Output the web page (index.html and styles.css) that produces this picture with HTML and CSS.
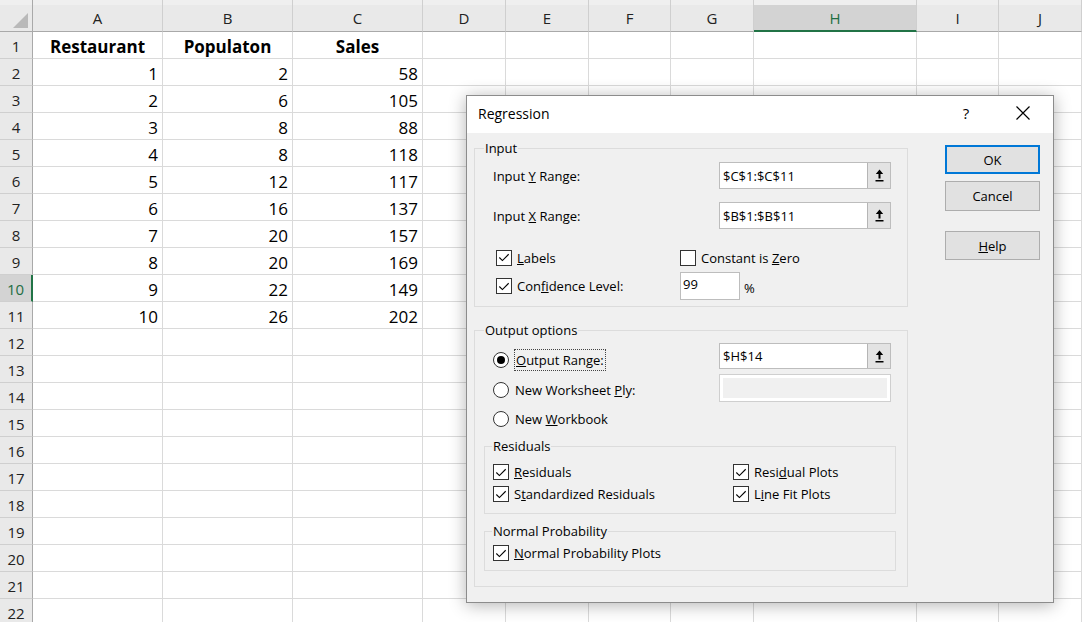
FILE: index.html
```html
<!DOCTYPE html>
<html>
<head>
<meta charset="utf-8">
<link rel="stylesheet" href="styles.css">
</head>
<body>
<div class="sheet">
  <div class="hd corner"><span class="tri"></span></div>
  <div class="hd col">A</div><div class="hd col">B</div><div class="hd col">C</div><div class="hd col">D</div><div class="hd col">E</div><div class="hd col">F</div><div class="hd col">G</div><div class="hd col sel">H</div><div class="hd col">I</div><div class="hd col">J</div>

  <div class="hd rw">1</div><div class="c b">Restaurant</div><div class="c b">Populaton</div><div class="c b">Sales</div><div class="c"></div><div class="c"></div><div class="c"></div><div class="c"></div><div class="c"></div><div class="c"></div><div class="c"></div>
  <div class="hd rw">2</div><div class="c n">1</div><div class="c n">2</div><div class="c n">58</div><div class="c"></div><div class="c"></div><div class="c"></div><div class="c"></div><div class="c"></div><div class="c"></div><div class="c"></div>
  <div class="hd rw">3</div><div class="c n">2</div><div class="c n">6</div><div class="c n">105</div><div class="c"></div><div class="c"></div><div class="c"></div><div class="c"></div><div class="c"></div><div class="c"></div><div class="c"></div>
  <div class="hd rw">4</div><div class="c n">3</div><div class="c n">8</div><div class="c n">88</div><div class="c"></div><div class="c"></div><div class="c"></div><div class="c"></div><div class="c"></div><div class="c"></div><div class="c"></div>
  <div class="hd rw">5</div><div class="c n">4</div><div class="c n">8</div><div class="c n">118</div><div class="c"></div><div class="c"></div><div class="c"></div><div class="c"></div><div class="c"></div><div class="c"></div><div class="c"></div>
  <div class="hd rw">6</div><div class="c n">5</div><div class="c n">12</div><div class="c n">117</div><div class="c"></div><div class="c"></div><div class="c"></div><div class="c"></div><div class="c"></div><div class="c"></div><div class="c"></div>
  <div class="hd rw">7</div><div class="c n">6</div><div class="c n">16</div><div class="c n">137</div><div class="c"></div><div class="c"></div><div class="c"></div><div class="c"></div><div class="c"></div><div class="c"></div><div class="c"></div>
  <div class="hd rw">8</div><div class="c n">7</div><div class="c n">20</div><div class="c n">157</div><div class="c"></div><div class="c"></div><div class="c"></div><div class="c"></div><div class="c"></div><div class="c"></div><div class="c"></div>
  <div class="hd rw">9</div><div class="c n">8</div><div class="c n">20</div><div class="c n">169</div><div class="c"></div><div class="c"></div><div class="c"></div><div class="c"></div><div class="c"></div><div class="c"></div><div class="c"></div>
  <div class="hd rw sel">10</div><div class="c n">9</div><div class="c n">22</div><div class="c n">149</div><div class="c"></div><div class="c"></div><div class="c"></div><div class="c"></div><div class="c"></div><div class="c"></div><div class="c"></div>
  <div class="hd rw">11</div><div class="c n">10</div><div class="c n">26</div><div class="c n">202</div><div class="c"></div><div class="c"></div><div class="c"></div><div class="c"></div><div class="c"></div><div class="c"></div><div class="c"></div>
  <div class="hd rw">12</div><div class="c"></div><div class="c"></div><div class="c"></div><div class="c"></div><div class="c"></div><div class="c"></div><div class="c"></div><div class="c"></div><div class="c"></div><div class="c"></div>
  <div class="hd rw">13</div><div class="c"></div><div class="c"></div><div class="c"></div><div class="c"></div><div class="c"></div><div class="c"></div><div class="c"></div><div class="c"></div><div class="c"></div><div class="c"></div>
  <div class="hd rw">14</div><div class="c"></div><div class="c"></div><div class="c"></div><div class="c"></div><div class="c"></div><div class="c"></div><div class="c"></div><div class="c"></div><div class="c"></div><div class="c"></div>
  <div class="hd rw">15</div><div class="c"></div><div class="c"></div><div class="c"></div><div class="c"></div><div class="c"></div><div class="c"></div><div class="c"></div><div class="c"></div><div class="c"></div><div class="c"></div>
  <div class="hd rw">16</div><div class="c"></div><div class="c"></div><div class="c"></div><div class="c"></div><div class="c"></div><div class="c"></div><div class="c"></div><div class="c"></div><div class="c"></div><div class="c"></div>
  <div class="hd rw">17</div><div class="c"></div><div class="c"></div><div class="c"></div><div class="c"></div><div class="c"></div><div class="c"></div><div class="c"></div><div class="c"></div><div class="c"></div><div class="c"></div>
  <div class="hd rw">18</div><div class="c"></div><div class="c"></div><div class="c"></div><div class="c"></div><div class="c"></div><div class="c"></div><div class="c"></div><div class="c"></div><div class="c"></div><div class="c"></div>
  <div class="hd rw">19</div><div class="c"></div><div class="c"></div><div class="c"></div><div class="c"></div><div class="c"></div><div class="c"></div><div class="c"></div><div class="c"></div><div class="c"></div><div class="c"></div>
  <div class="hd rw">20</div><div class="c"></div><div class="c"></div><div class="c"></div><div class="c"></div><div class="c"></div><div class="c"></div><div class="c"></div><div class="c"></div><div class="c"></div><div class="c"></div>
  <div class="hd rw">21</div><div class="c"></div><div class="c"></div><div class="c"></div><div class="c"></div><div class="c"></div><div class="c"></div><div class="c"></div><div class="c"></div><div class="c"></div><div class="c"></div>
  <div class="hd rw">22</div><div class="c"></div><div class="c"></div><div class="c"></div><div class="c"></div><div class="c"></div><div class="c"></div><div class="c"></div><div class="c"></div><div class="c"></div><div class="c"></div>
</div>

<div class="dialog">
  <div class="titlebar">
    <span class="title">Regression</span>
    <span class="tb-help">?</span>
    <span class="tb-close"><svg width="16" height="16" viewBox="0 0 16 16"><path d="M1.5 1.5 L14.5 14.5 M14.5 1.5 L1.5 14.5" stroke="#000" stroke-width="1.2" fill="none"/></svg></span>
  </div>
  <div class="dbody">
    <div class="left">
      <fieldset class="grp">
        <legend>Input</legend>
        <div class="inp-body">
          <div class="frow">
            <span>Input <u>Y</u> Range:</span>
            <span class="tbox"><span class="tval">$C$1:$C$11</span><span class="pick"><svg width="9" height="13" viewBox="0 0 9 13"><path d="M4.5 0.5 L0.8 5 H3.5 V9.5 H5.5 V5 H8.2 Z" fill="#000"/><rect x="0.5" y="11" width="8" height="1.5" fill="#000"/></svg></span></span>
          </div>
          <div class="frow r2">
            <span>Input <u>X</u> Range:</span>
            <span class="tbox"><span class="tval">$B$1:$B$11</span><span class="pick"><svg width="9" height="13" viewBox="0 0 9 13"><path d="M4.5 0.5 L0.8 5 H3.5 V9.5 H5.5 V5 H8.2 Z" fill="#000"/><rect x="0.5" y="11" width="8" height="1.5" fill="#000"/></svg></span></span>
          </div>
          <div class="cgrid">
            <label class="chk"><span class="cb on"><svg width="15" height="15" viewBox="0 0 15 15"><path d="M2.5 7.5 L5.8 10.8 L12.5 4" stroke="#000" stroke-width="1.2" fill="none"/></svg></span><span><u>L</u>abels</span></label>
            <label class="chk"><span class="cb"></span><span>Constant is <u>Z</u>ero</span></label>
            <label class="chk r2"><span class="cb on"><svg width="15" height="15" viewBox="0 0 15 15"><path d="M2.5 7.5 L5.8 10.8 L12.5 4" stroke="#000" stroke-width="1.2" fill="none"/></svg></span><span>Con<u>f</u>idence Level:</span></label>
            <span class="conf r2"><span class="tbox small"><span class="tval">99</span></span><span class="pct">%</span></span>
          </div>
        </div>
      </fieldset>

      <fieldset class="grp out">
        <legend>Output options</legend>
        <div class="out-body">
          <div class="out-top">
            <div class="radios">
              <label class="rad"><span class="rb on"></span><span class="focus"><u>O</u>utput Range:</span></label>
              <label class="rad"><span class="rb"></span><span>New Worksheet <u>P</u>ly:</span></label>
              <label class="rad"><span class="rb"></span><span>New <u>W</u>orkbook</span></label>
            </div>
            <div class="boxes">
              <span class="tbox h26"><span class="tval">$H$14</span><span class="pick"><svg width="9" height="13" viewBox="0 0 9 13"><path d="M4.5 0.5 L0.8 5 H3.5 V9.5 H5.5 V5 H8.2 Z" fill="#000"/><rect x="0.5" y="11" width="8" height="1.5" fill="#000"/></svg></span></span>
              <span class="tbox dis"><span class="dis-in"></span></span>
            </div>
          </div>
          <fieldset class="grp sub">
            <legend>Residuals</legend>
            <div class="sub-body two">
              <label class="chk"><span class="cb on"><svg width="15" height="15" viewBox="0 0 15 15"><path d="M2.5 7.5 L5.8 10.8 L12.5 4" stroke="#000" stroke-width="1.2" fill="none"/></svg></span><span><u>R</u>esiduals</span></label>
              <label class="chk"><span class="cb on"><svg width="15" height="15" viewBox="0 0 15 15"><path d="M2.5 7.5 L5.8 10.8 L12.5 4" stroke="#000" stroke-width="1.2" fill="none"/></svg></span><span>Resi<u>d</u>ual Plots</span></label>
              <label class="chk"><span class="cb on"><svg width="15" height="15" viewBox="0 0 15 15"><path d="M2.5 7.5 L5.8 10.8 L12.5 4" stroke="#000" stroke-width="1.2" fill="none"/></svg></span><span>S<u>t</u>andardized Residuals</span></label>
              <label class="chk"><span class="cb on"><svg width="15" height="15" viewBox="0 0 15 15"><path d="M2.5 7.5 L5.8 10.8 L12.5 4" stroke="#000" stroke-width="1.2" fill="none"/></svg></span><span>L<u>i</u>ne Fit Plots</span></label>
            </div>
          </fieldset>
          <fieldset class="grp sub np">
            <legend>Normal Probability</legend>
            <div class="sub-body one">
              <label class="chk"><span class="cb on"><svg width="15" height="15" viewBox="0 0 15 15"><path d="M2.5 7.5 L5.8 10.8 L12.5 4" stroke="#000" stroke-width="1.2" fill="none"/></svg></span><span><u>N</u>ormal Probability Plots</span></label>
            </div>
          </fieldset>
        </div>
      </fieldset>
    </div>
    <div class="btns">
      <button class="btn def">OK</button>
      <button class="btn cancel">Cancel</button>
      <button class="btn help"><u>H</u>elp</button>
    </div>
  </div>
</div>
</body>
</html>
```

FILE: styles.css
```css
html, body {
  margin: 0;
  padding: 0;
  background: #fff;
  overflow: hidden;
  width: 1082px;
  height: 622px;
}

.sheet {
  display: grid;
  grid-template-columns: 33px 130px 130px 130px 83px 83px 82px 83px 163px 82px 83px;
  grid-template-rows: 32px;
  grid-auto-rows: 27px;
  font-family: "Open Sans", sans-serif;
}

.hd {
  box-sizing: border-box;
  background: #e9e9e9;
  color: #222;
  display: flex;
  align-items: center;
  justify-content: center;
}

.hd.col {
  font-size: 15px;
  border-right: 1px solid #cfcfcf;
  border-bottom: 1px solid #a9a9a9;
  box-shadow: inset 0 5px 0 #efefef;
  padding-top: 5px;
}

.hd.col.sel {
  background: #d3d3d3;
  color: #1f6e43;
  border-bottom: 2px solid #217346;
  box-shadow: inset 0 5px 0 #efefef;
}

.corner {
  border-right: 1px solid #a9a9a9;
  border-bottom: 1px solid #a9a9a9;
  box-shadow: inset 0 5px 0 #efefef;
  position: relative;
}

.tri {
  position: absolute;
  right: 4px;
  bottom: 3px;
  width: 0;
  height: 0;
  border-left: 15px solid transparent;
  border-bottom: 15px solid #b9b9b9;
}

.hd.rw {
  font-size: 15px;
  border-right: 1px solid #a9a9a9;
  border-bottom: 1px solid #cfcfcf;
  padding-top: 2px;
}

.hd.rw.sel {
  background: #d3d3d3;
  color: #1f6e43;
  border-right: 2px solid #217346;
}

.c {
  box-sizing: border-box;
  border-right: 1px solid #dadada;
  border-bottom: 1px solid #dadada;
  font-size: 17px;
  color: #000;
  line-height: 27px;
  padding: 1px 4px 0 4px;
  white-space: nowrap;
  overflow: hidden;
}

.c.b {
  font-weight: 700;
  text-align: center;
}

.c.n {
  text-align: right;
}

/* Dialog */
.dialog {
  position: absolute;
  left: 466px;
  top: 95px;
  width: 588px;
  height: 508px;
  box-sizing: border-box;
  border: 1px solid #8c8c8c;
  background: #f0f0f0;
  box-shadow: 0 2px 16px rgba(0, 0, 0, 0.3);
  font-family: "Open Sans", sans-serif;
  font-size: 13px;
  color: #000;
  display: flex;
  flex-direction: column;
}

.titlebar {
  height: 37px;
  background: #fff;
  display: flex;
  align-items: center;
  padding-left: 11px;
  padding-bottom: 3px;
  box-sizing: border-box;
  flex: none;
}

.title {
  font-size: 14px;
  flex: 1;
}

.tb-help {
  width: 46px;
  text-align: center;
  font-size: 15px;
  margin-right: 11px;
}

.tb-close {
  width: 46px;
  display: flex;
  justify-content: center;
  margin-right: 7px;
}

.dbody {
  display: flex;
  padding: 6px 0 0 7px;
  flex: 1;
}

.left {
  width: 434px;
  flex: none;
}

.grp {
  margin: 0;
  padding: 0;
  border: 1px solid #dcdcdc;
  min-inline-size: 0;
}

.grp legend {
  margin-left: 9px;
  padding: 0 1px;
  line-height: 18px;
  font-size: 13px;
}

.inp-body {
  padding: 5px 16px 6px 18px;
}

.frow {
  display: grid;
  grid-template-columns: 226px 172px;
  height: 27px;
  align-items: center;
}

.frow.r2 {
  margin-top: 13px;
}

.tbox {
  box-sizing: border-box;
  display: flex;
  height: 27px;
  border: 1px solid #bdbdbd;
  background: #fff;
  align-items: stretch;
}

.tbox.h26 {
  height: 26px;
}

.tval {
  flex: 1;
  padding-left: 3px;
  display: flex;
  align-items: center;
}

.pick {
  width: 22px;
  flex: none;
  background: #e3e3e3;
  border-left: 1px solid #b5b5b5;
  display: flex;
  align-items: center;
  justify-content: center;
}

.cgrid {
  display: grid;
  grid-template-columns: 184px auto;
  grid-template-rows: 17px 28px;
  row-gap: 6px;
  margin-top: 20px;
  padding-left: 3px;
}

.chk {
  display: flex;
  align-items: center;
  gap: 5px;
  white-space: nowrap;
}

.cb {
  box-sizing: border-box;
  width: 16px;
  height: 16px;
  border: 1px solid #333;
  background: #fff;
  display: flex;
  align-items: center;
  justify-content: center;
  flex: none;
}

.conf {
  display: flex;
  align-items: center;
  gap: 4px;
}

.tbox.small {
  width: 60px;
  height: 28px;
}

.tbox.small .tval {
  padding-left: 2px;
  align-items: flex-start;
  padding-top: 2px;
}

.pct {
  padding-top: 4px;
}

.grp.out {
  margin-top: 14px;
}

.out-body {
  padding: 4px 11px 15px 9px;
}

.out-top {
  display: flex;
}

.radios {
  width: 235px;
  box-sizing: border-box;
  padding: 6px 0 0 9px;
  display: flex;
  flex-direction: column;
  gap: 8px;
  flex: none;
}

.rad {
  display: flex;
  align-items: center;
  gap: 6px;
  height: 22px;
  white-space: nowrap;
}

.rad:last-child {
  margin-top: -1px;
}

.rb {
  box-sizing: border-box;
  width: 16px;
  height: 16px;
  border: 1px solid #333;
  border-radius: 50%;
  background: #fff;
  display: flex;
  align-items: center;
  justify-content: center;
  flex: none;
}

.rb.on::after {
  content: "";
  width: 8px;
  height: 8px;
  border-radius: 50%;
  background: #000;
}

.focus {
  outline: 1px dotted #444;
  outline-offset: 1px;
  margin-left: 1px;
}

.boxes {
  width: 172px;
  display: flex;
  flex-direction: column;
  gap: 5px;
}

.tbox.dis {
  height: 28px;
  padding: 3px;
  border-color: #cfcfcf;
}

.dis-in {
  flex: 1;
  background: #f0f0f0;
}

.grp.sub {
  margin-top: 7px;
}

.grp.sub legend {
  margin-left: 7px;
}

.sub-body {
  display: grid;
  grid-auto-rows: 22px;
  align-items: center;
}

.sub-body.two {
  grid-template-columns: 240px auto;
  padding: 6px 0 8px 8px;
}

.sub-body.one {
  padding: 2px 0 6px 8px;
}

.grp.np {
  margin-top: 8px;
}

.btns {
  margin-left: 37px;
  width: 95px;
  padding-top: 6px;
  display: flex;
  flex-direction: column;
}

.btn {
  box-sizing: border-box;
  height: 29px;
  width: 95px;
  background: #e1e1e1;
  border: 1px solid #adadad;
  font-family: "Open Sans", sans-serif;
  font-size: 13px;
  color: #000;
  padding: 0;
}

.btn.def {
  border: 1px solid #0078d7;
  box-shadow: inset 0 0 0 1px #0078d7;
}

.btn.cancel {
  margin-top: 7px;
  height: 30px;
}

.btn.help {
  margin-top: 20px;
}
```
